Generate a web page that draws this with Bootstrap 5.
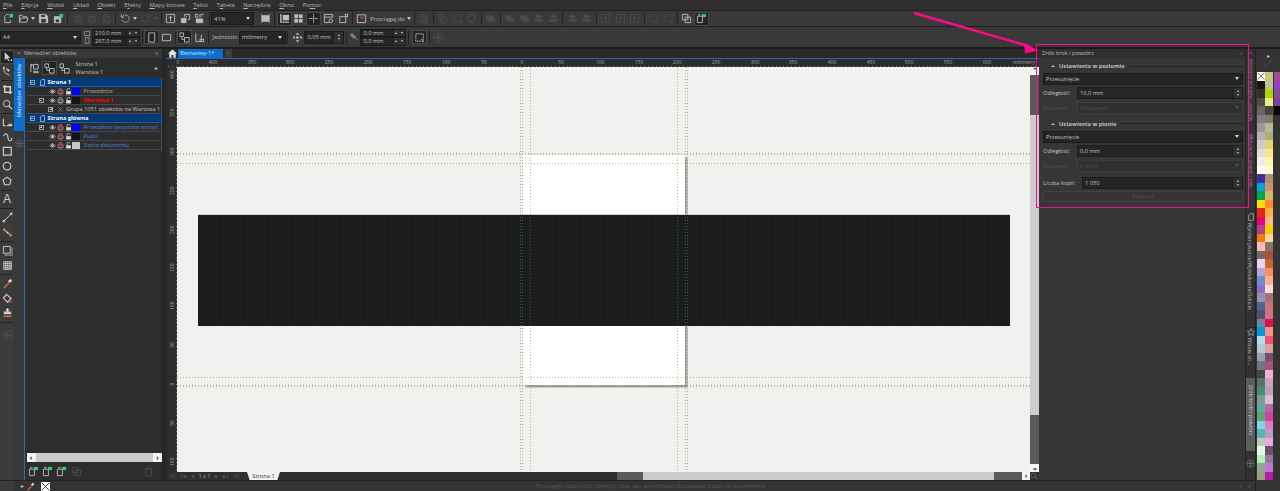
<!DOCTYPE html>
<html lang="pl">
<head>
<meta charset="utf-8">
<title>Zrób krok i powtórz</title>
<link href="https://cdn.jsdelivr.net/npm/bootstrap@5.3.0/dist/css/bootstrap.min.css" rel="stylesheet">
<style>
html,body{margin:0;height:491px;overflow:hidden}
body{width:1280px;background:#333;font-family:"Open Sans","Liberation Sans",sans-serif;font-size:5.7px;line-height:8px;color:#c4c4c4;position:relative}
.ic{width:11px;height:11px;fill:none;stroke:currentColor;stroke-width:1;display:block;flex:none}
.menu-strip{height:11px;background:#2f2f2f;border-bottom:1px solid #1f1f1f;padding-left:3px;gap:8.6px;font-size:5.9px;line-height:10px;color:#b8b8b8}
.tool-strip{background:#393939;border-bottom:1px solid #1f1f1f;padding-left:1px;color:#bdbdbd}
.ts-a{height:16px}
.ts-b{height:22px;padding-left:0;border-bottom:2px solid #1c1c1c}
.tbtn{width:14.7px;height:14px;flex:none;display:flex;align-items:center;justify-content:center}
.tbtn.on{background:#232323;box-shadow:inset 0 0 0 1px #4a4a4a}
.tbtn.off{color:#4d4d4d}
.vsep{width:1px;height:13px;background:#222;margin:0 1.5px;flex:none}
.drop-c{width:0;height:0;border:2px solid transparent;border-top:3px solid #c4c4c4;border-bottom:0;margin:0 1.5px 0 .5px;flex:none}
.drop-c.off{border-top-color:#4d4d4d}
.dk-field{background:#252525;border:1px solid #1b1b1b;color:#c4c4c4;display:flex;align-items:center;padding:0 2px;font-size:5.7px;line-height:8px;position:relative;flex:none;white-space:nowrap}
.fld-spin{margin-left:auto;width:10px;align-self:stretch;background:#303030;border-left:1px solid #1b1b1b;display:flex;flex-direction:column;align-items:center;justify-content:space-around;margin-right:-2px;padding:1px 0}
.fld-spin i{display:block;width:0;height:0;border:1.5px solid transparent}
.fld-spin i:first-child{border-bottom:2px solid #d0d0d0;border-top:0}
.fld-spin i:last-child{border-top:2px solid #d0d0d0;border-bottom:0}
.fld-spin.wide{flex-direction:row;width:13px;justify-content:space-around;padding:0;align-items:center}
.fld-arrow{margin-left:auto;width:0;height:0;border:2px solid transparent;border-top:3px solid #d5d5d5;border-bottom:0;margin-right:1px}
.cb-zoom{width:43px;height:13px}
.cb-page{width:81px;height:13px}
.cb-unit{width:47px;height:13px}
.fd-nudge{width:40px;height:13px}
.st2{display:flex;flex-direction:column;flex:none}
.st-ic{width:9px;margin-left:2px}
.st-sz{width:48px}
.st-off{width:46px;margin-left:2px}
.st-ic .ic{width:8px;height:7px}
.st2 .dk-field{height:8.5px}
.snap-lbl{width:33px;margin-left:1px;white-space:nowrap}
.unit-lbl{width:26px;margin-left:2px;white-space:nowrap}
.trf-ic{width:8px;height:16px;margin-left:2px}
.nudge-sel{margin-left:2px}
.below{height:442px}
.left-area{width:1255px;flex:none}
.main-area{height:431px}
.tools{width:14px;background:#3b3b3b;padding-top:.5px;flex:none;color:#d0d0d0}
.tools .tbtn{width:14px;height:14.6px}
.tool-a{font-size:12px;font-family:"Liberation Sans",sans-serif;line-height:12px}
.hsep{height:1px;background:#222;margin:1.4px 1px;flex:none}
.rail-l{width:10px;background:#383838;flex:none}
.rail-x{height:9px;line-height:9px;text-align:center;color:#aaa;flex:none}
.tab-v{writing-mode:vertical-rl;transform:rotate(180deg);background:#0b6ed0;color:#e8f1fb;height:73px;width:10px;font-size:5.8px;line-height:10px;text-align:right;padding-bottom:5px;white-space:nowrap}
.add-cir{width:9px;height:9px;color:#5c5c5c;margin:0 auto}
.dock-l{width:138px;background:#2d2d2d;flex:none;display:flex;flex-direction:column}
.dock-head{height:9px;background:#383838;line-height:9px;color:#b7b7b7;flex:none}
.dock-inner{flex:1;border-left:1.5px solid #2a6cb5;padding-left:1.5px;display:flex;flex-direction:column;min-height:0}
.obj-top{height:20px;flex:none;padding-left:1px;gap:0}
.obj-row{height:9px;line-height:8px;border-bottom:1px solid #484848;border-right:1px solid #484848;display:flex;align-items:center;white-space:nowrap;flex:none;overflow:hidden}
.obj-row.pg{background:#003a78;color:#fff;font-weight:700;border-color:#1d5a9c;padding-left:3px}
.exp{width:5px;height:5px;border:.7px solid #9a9a9a;position:relative;flex:none;display:block}
.exp::after{content:"";position:absolute;left:.5px;right:.5px;top:1.5px;height:.8px;background:#bbb}
.exp.plus::before{content:"";position:absolute;top:.5px;bottom:.5px;left:1.5px;width:.8px;background:#bbb}
.cols{display:grid;grid-template-columns:22px 8px 8px 7px 8px auto;align-items:center}
.cols .exp{margin-left:12px}
.mini{width:7px;height:7px}
.pg-ic{margin-left:4px;margin-right:2px;color:#cfe0f4}
.eye{color:#d4d4d4}.prn{color:#d77}.lck{color:#ddd}.prn-n{color:#bbb}
.swz{width:8px;height:7px;display:block}
.sw-blue{background:#0000ff}.sw-blk{background:#141414}.sw-gry{background:#c6c6c6}
.lbl{margin-left:4px}
.gd{color:#3d86d8;font-style:italic}
.pv{color:#a9a9a9;font-style:italic}
.red{color:#f00;font-weight:700}
.grp-row{padding-left:21.5px}
.grp-ic{width:5px;height:5px;margin:0 3px 0 5px;color:#aaa}
.obj-spacer{flex:1}
.lst-scroll{height:9px;background:#cbcbcb;display:flex;justify-content:space-between;flex:none}
.lst-scroll span,.sb-btn{background:#f4f4f4;color:#222;width:9px;display:flex;align-items:center;justify-content:center;font-weight:700;font-size:7px;line-height:8px;flex:none}
.obj-foot{height:18px;color:#bbb;flex:none;padding-left:1px;gap:3px}
.obj-foot .tbtn{width:11.4px}
.gut{width:4px;background:#262626;flex:none}
.work{width:873px;flex:none;display:flex;flex-direction:column;background:#2b2b2b}
.tabs-row{height:10px;background:#2a2a2a;border-bottom:1.5px solid #2a66ad;flex:none;align-items:stretch}
.home{width:12px;color:#e4e4e4;display:flex;align-items:center;justify-content:center;flex:none}
.doc-tab{width:45px;background:#0b6ed0;color:#cfe4f8;padding-left:2px;line-height:8px;flex:none}
.add-tab{width:7px;margin-left:2px;background:#3c3c3c;color:#666;text-align:center;line-height:8px;font-weight:700;flex:none}
.hr-ruler{height:8px;margin-left:2px;background-color:#2d2d2d;position:relative;overflow:hidden;flex:none;
 background-image:repeating-linear-gradient(90deg,#7a7a7a 0 1px,transparent 1px 3.87px);background-size:100% 1.5px;background-repeat:no-repeat;background-position:0 100%}
.rlab{position:absolute;top:0;font-size:5px;line-height:6px;color:#a0a0a0;transform:translateX(-50%);white-space:nowrap}
.work-mid{height:405px;flex:none;margin-left:2px}
.vr-ruler{width:9px;background-color:#2d2d2d;position:relative;flex:none;overflow:hidden;
 background-image:repeating-linear-gradient(180deg,#7a7a7a 0 1px,transparent 1px 3.87px);background-size:1.5px 100%;background-repeat:no-repeat;background-position:100% 0}
.vlab{position:absolute;left:0;font-size:5px;line-height:6px;color:#a0a0a0;transform:translateY(-50%) rotate(-90deg);width:8px;text-align:center}
.paper{width:853px;background:#f1f1ef;position:relative;overflow:hidden;flex:none}
.pg-white{position:absolute;left:346px;top:88px;width:162px;height:230px;background:#fff;box-shadow:2.5px 2.5px 0 #a4a4a4}
.pg-dark{position:absolute;left:21px;top:147px;width:812px;height:112px;background-color:#1b1c1c;border-top:1px solid #d4d4d4;
 background-image:repeating-linear-gradient(90deg,rgba(255,255,255,.014) 0 1px,transparent 1px 6px)}
.gl-h,.gl-v{position:absolute}
.gl-h{left:0;right:0;height:1px;background:repeating-linear-gradient(90deg,rgba(105,145,70,.55) 0 1px,transparent 1px 3px)}
.gl-v{top:0;bottom:0;width:1px;background:repeating-linear-gradient(180deg,rgba(105,145,70,.55) 0 1px,transparent 1px 3px)}
.v-scroll{width:9px;background:#5a5a5a;display:flex;flex-direction:column;flex:none}
.sb-btn{height:8px;width:100%}
.v-thumb{height:300px;background:#cdcdcd;margin-top:40px;flex:none}
.work-bot{height:8px;flex:none;margin-left:2px;background:#2f2f2f;color:#5f5f5f;font-size:5.5px;line-height:8px}
.pg-nav{width:79px;flex:none;padding:0 8px 0 2px;background:#2f2f2f;justify-content:space-between}
.pg-nav b{color:#b6b6b6;font-weight:400}
.pg-tab{width:33px;background:#f2f2f2;color:#333;text-align:center;flex:none;clip-path:polygon(0 0,100% 0,92% 100%,8% 100%);font-size:5.7px}
.hs-a{width:337px;flex:none;background:#2f2f2f}
.hs-b{width:26px;flex:none;background:#5a5a5a}
.hs-c{width:351px;flex:none;background:#cbcbcb}
.hs-d{width:28px;flex:none;background:#5a5a5a}
.hs-btn{width:8px;flex:none;background:#f4f4f4;color:#222;text-align:center;font-weight:700;line-height:8px;font-size:7px}
.hs-z{width:9px;flex:none;color:#6c6c6c}
.hs-z .ic{width:8px;height:8px}
.dock-r{width:206px;flex:none;background:#363636;display:flex;flex-direction:column}
.head-r{height:9px;background:#2f2f2f;line-height:9px;padding:0 3px;color:#bdbdbd;flex:none}
.head-r .dbl-ch{color:#777}
.panel-r{padding:4px 2px 0 4px;display:flex;flex-direction:column;gap:2.3px}
.grp{height:8px;font-weight:700;color:#bdbdbd;display:flex;align-items:center;gap:4px;padding-left:8px;margin-bottom:.7px}
.grp::before{content:"";width:0;height:0;border:2px solid transparent;border-bottom:2.5px solid #bdbdbd;border-top:0;flex:none}
.grp::after{content:"";flex:1;height:1px;background:#222}
.grp-next{margin-top:4.1px}
.fw{height:12px;width:100%}
.form-lbl{width:34px;flex:none;color:#c4c4c4;white-space:nowrap}
.form-lbl.dim{color:#505050}
.form-lbl.lng{width:39px}
.fld-off{background:#303030;border-color:#3d3d3d;color:#4f4f4f}
.fld-off .fld-arrow{border-top-color:#505050}
.frow{height:12px;display:flex;align-items:center}
.frow-copies{margin-top:3px}
.btn.apply,.btn.apply:disabled{height:11px;padding:0;background:#343434;border:1px solid #424242;color:#525252;font-size:5.7px;line-height:9px;border-radius:0;width:100%;opacity:1}
.rail-r{width:10px;background:#323232;border-left:1px solid #222;flex:none;position:relative;display:flex;flex-direction:column}
.rail-rx{height:10px;line-height:9px;text-align:center;color:#777;flex:none}
.vt{writing-mode:vertical-rl;font-size:5.4px;line-height:9px;color:#b4b4b4;white-space:nowrap;overflow:hidden;width:9px;flex:none}
.vt .ic{width:8px;height:8px;display:inline-block}
.vt.dim{color:#8c8c8c}
.vt.act{background:#5c5c5c;color:#d0d0d0}
.rt1{height:75px;font-size:4.4px}
.rt2{height:72px;font-size:4.4px}
.rt3{height:113px;margin-top:7px}
.rt4{height:43px;margin-top:1px;border-top:1px solid #222}
.rt5{height:73px;margin-top:8px;padding-top:7px}
.rail-add{width:9px;height:9px;color:#6a6a6a}
.status{height:11px;background:#333;border-top:1px solid #222;color:#5a5a5a;position:relative;flex:none}
.st-edge{width:14px;align-self:stretch;background:#3b3b3b;flex:none}
.st-l{padding-left:7px;gap:2px;color:#c4c4c4;width:436px;flex:none}
.st-l .ic{width:9px;height:9px}
.st-ch{color:#555}
.st-t{width:302px;text-align:center;flex:none;margin-left:49px}
.st-r{margin-left:auto;padding-right:4px;gap:5px;color:#5a5a5a;font-size:8px}
.x-sw{width:9px;height:9px;background:#fff;color:#333;flex:none;display:block}
.palette{width:25px;background:#333;border-left:1px solid #222;flex:none;display:flex;flex-direction:column}
.pal-top{height:23px;color:#c4c4c4;flex:none;padding-top:3px}
.pal-drop{width:8px;height:8px;color:#4b4b4b;margin:0 auto}
.pal-cols{gap:.5px;padding-left:.5px}
.pal-col{width:8px;display:flex;flex-direction:column;flex:none}
.pal-col i{display:block;height:8.5px;flex:none;color:#333}
.pal-col .ic{width:8px;height:8.5px}
.overlay{position:absolute;left:0;top:0;width:1280px;height:491px;pointer-events:none}
.pink-box{position:absolute;left:1036px;top:44px;width:213px;height:164px;border:1.5px solid #fb0a8c;pointer-events:none}
</style>
</head>
<body>
<svg width="0" height="0" class="position-absolute">
<defs>
<symbol id="new" viewBox="0 0 12 12"><path d="M2 3.500v7h6v-3" /><path d="M2 3.500 4 1.500h2"/><rect x="7" y="1" width="4" height="4" fill="#2fd06a" stroke="none"/></symbol>
<symbol id="open" viewBox="0 0 12 12"><path d="M1.500 10V2.500h3l1 1.500h4v1.500M1.500 10l1.500-4.500h8L9.500 10z"/></symbol>
<symbol id="save" viewBox="0 0 12 12"><path d="M1.500 1.500h7l2 2v7h-9z" fill="currentColor"/><rect x="3.500" y="2" width="4" height="2.500" fill="#393939" stroke="none"/><rect x="3.500" y="6.500" width="5" height="4" fill="#393939" stroke="none"/></symbol>
<symbol id="savep" viewBox="0 0 12 12"><path d="M1.500 4h6l1 1v5.500h-7z" fill="currentColor"/><rect x="3" y="7" width="3.500" height="3" fill="#393939" stroke="none"/><rect x="7" y="1" width="4" height="4" fill="#2fd06a" stroke="none"/></symbol>
<symbol id="clip" viewBox="0 0 12 12"><path d="M3 2h5v7H3zM5 4h5v6.500H5z"/></symbol>
<symbol id="undo" viewBox="0 0 12 12"><path d="M3 3.500a4 4 0 1 1-1 3" stroke-dasharray="2 .6"/><path d="M1.500 1.500v3h3"/></symbol>
<symbol id="redo" viewBox="0 0 12 12"><path d="M9 3.500a4 4 0 1 0 1 3"/><path d="M10.500 1.500v3h-3"/></symbol>
<symbol id="imp" viewBox="0 0 12 12"><path d="M1.500 1.500h9v9h-9zM6 9V4M4 5.500 6 3.500l2 2"/></symbol>
<symbol id="exp" viewBox="0 0 12 12"><path d="M1.500 6h5v4.500h-5z" fill="currentColor"/><path d="M5 4V1.500h5.500V7H8.500" /><path d="M6 5l2-2"/></symbol>
<symbol id="pdf" viewBox="0 0 12 12"><path d="M2.500 6.500h7v4h-7z" fill="currentColor"/><path d="M1.500 1.500h3M5.500 1.500v3M7.500 1.500h3M7.500 1.500v3M1.500 1.500v3h3"/></symbol>
<symbol id="full" viewBox="0 0 12 12"><path d="M2 3h8v6H2z" fill="currentColor"/><path d="M1 1.500 3 3M11 1.500 9 3M1 10.500 3 9M11 10.500 9 9"/></symbol>
<symbol id="rul" viewBox="0 0 12 12"><path d="M2 1v9h9" stroke-width="1.500"/><rect x="4" y="2" width="7" height="6" fill="currentColor" stroke="none"/></symbol>
<symbol id="grd" viewBox="0 0 12 12"><rect x="1.500" y="1.500" width="9" height="9" fill="currentColor" stroke="none"/><path d="M1.500 6h9M6 1.500v9" stroke="#393939"/></symbol>
<symbol id="gui" viewBox="0 0 12 12"><path d="M6 1v10M1 6h10" stroke-dasharray="1.500 .5" /></symbol>
<symbol id="pgv" viewBox="0 0 12 12"><path d="M1.500 1.500h9v3h-9zM1.500 4.500v6h5"/><circle cx="8.500" cy="8.500" r="2"/></symbol>
<symbol id="snp" viewBox="0 0 12 12"><rect x="2" y="4" width="6.500" height="6.500"/><rect x="8" y="1.500" width="2.500" height="2.500"/></symbol>
<symbol id="mag" viewBox="0 0 12 12"><path d="M1.500 2h9v8.500h-9z"/><path d="M5 3.500l3 3M8 3.500l-3 3" stroke="#e05050"/></symbol>
<symbol id="al1" viewBox="0 0 12 12"><path d="M1.500 3h7v3h-7zM3.500 6h7v3h-7z" fill="currentColor"/></symbol>
<symbol id="al2" viewBox="0 0 12 12"><path d="M6 1v10M3 3h6v2H3zM2 7h8v2H2z" fill="currentColor"/></symbol>
<symbol id="hm" viewBox="0 0 12 12"><path d="M6 1.500 1 6h1.500v4.500h2.500V7.500h2v3h2.500V6H11z" fill="currentColor" stroke="none"/></symbol>
<symbol id="dbl" viewBox="0 0 12 12"><path d="M1.500 1.500h6v6h-6zM4.500 4.500h6v6h-6z"/></symbol>
<symbol id="dblg" viewBox="0 0 12 12"><path d="M1.500 3.500h5.500v7h-5.500z"/><path d="M3 3V1.500h2"/><rect x="6.500" y="1" width="4.500" height="3.500" fill="#2fd06a" stroke="none"/></symbol>
<symbol id="wd" viewBox="0 0 12 12"><path d="M2 1.500h1.500v1.500H2zM2 3v7M5 1.500h5v5H5zM5 9h5v1.500H5z"/></symbol>
<symbol id="hw" viewBox="0 0 12 12"><path d="M1.500 2.500h9v7h-9z"/></symbol>
<symbol id="vw" viewBox="0 0 12 12"><path d="M3 1h6.500v10H3z"/></symbol>
<symbol id="ob1" viewBox="0 0 12 12"><path d="M1 1h4v4H1zM6 6h5v5H6zM3 5v3h3"/></symbol>
<symbol id="ob2" viewBox="0 0 12 12"><path d="M2 1.500v9h4M8 3v7.500"/><rect x="6.500" y="8" width="4" height="2.500"/></symbol>
<symbol id="nudge" viewBox="0 0 12 12"><path d="M6 .5 8 3H4zM6 11.500 4 9h4zM.5 6 3 4v4zM11.500 6 9 8V4z" fill="currentColor" stroke="none"/><circle cx="6" cy="6" r="1.500" fill="currentColor" stroke="none"/></symbol>
<symbol id="trf" viewBox="0 0 12 12"><path d="M1.500 1.500h3v3h-3zM4.500 4.500H8v3H4.500zM9 8.500l2 2"/></symbol>
<symbol id="sel" viewBox="0 0 12 12"><path d="M2 2h8v8H2z" stroke-dasharray="2 .6"/><path d="M7.500 7.500 11 11" /></symbol>
<symbol id="plusc" viewBox="0 0 12 12"><circle cx="6" cy="6" r="5"/><path d="M6 1.500v9M1.500 6h9" stroke-width="1.500"/></symbol>
<symbol id="pick" viewBox="0 0 12 12"><path d="M3 1v9l2.200-2 1.600 3.200 1.300-.7-1.600-3H9z" fill="currentColor" stroke="none"/><rect x="9.500" y="9.500" width="1.500" height="1.500" fill="#fff" stroke="none"/></symbol>
<symbol id="shp" viewBox="0 0 12 12"><path d="M2 2.500 2.500 6 4 8l4 2"/><rect x="1" y="1" width="2" height="2" fill="currentColor" stroke="none"/><path d="M5 3l2 3 1-1.500z" fill="currentColor"/></symbol>
<symbol id="crp" viewBox="0 0 12 12"><path d="M3 1v8h8M1 3h8v8" stroke-width="1.600"/></symbol>
<symbol id="zm" viewBox="0 0 12 12"><circle cx="5" cy="5" r="3.500"/><path d="M7.500 7.500 11 11" stroke-width="1.500"/></symbol>
<symbol id="fh" viewBox="0 0 12 12"><path d="M1.500 2v7.500H4M5 9.500h2.500" stroke-width="1.200"/><path d="M7 7.500h4v2.500H7z" fill="currentColor" stroke="none"/></symbol>
<symbol id="art" viewBox="0 0 12 12"><path d="M2 4.500C2 2 5 1 6 3.500S6 9 8 9.500s3-1 2.500-3" stroke-width="1.200"/></symbol>
<symbol id="rct" viewBox="0 0 12 12"><path d="M1.500 1.500h8.500v8.500H1.500z" stroke-width="1.300"/></symbol>
<symbol id="ell" viewBox="0 0 12 12"><circle cx="5.500" cy="5.500" r="4.200" stroke-width="1.200"/></symbol>
<symbol id="pol" viewBox="0 0 12 12"><path d="M5.500 1.200 9.800 4.300 8.200 9.500H2.800L1.200 4.300z" stroke-width="1.200"/></symbol>
<symbol id="ln" viewBox="0 0 12 12"><path d="M2 10 10 2"/><circle cx="2" cy="10" r="1" fill="currentColor"/><circle cx="10" cy="2" r="1" fill="currentColor"/></symbol>
<symbol id="con" viewBox="0 0 12 12"><path d="M2 3 10 9" stroke="#ddd" /><circle cx="2.500" cy="3" r="1.500" fill="#e0733a" stroke="none"/><circle cx="9.500" cy="9" r="1.500" fill="#e0733a" stroke="none"/><circle cx="6" cy="6" r="1" fill="#ddd" stroke="none"/></symbol>
<symbol id="shd" viewBox="0 0 12 12"><path d="M1.500 1.500h7.500v7.500H1.500z"/><path d="M9.500 3.500h1.500v7.500H3.500V9.500" stroke-width="1.300" stroke="#8a8a8a"/></symbol>
<symbol id="chk" viewBox="0 0 12 12"><rect x="1.500" y="1.500" width="9" height="9" fill="#eee" stroke="none"/><path d="M2 3h8M2 5h8M2 7h8M2 9h8" stroke="#333" stroke-dasharray="1 1"/><path d="M3 2v8M5 2v8M7 2v8M9 2v8" stroke="#333" stroke-dasharray="1 1"/></symbol>
<symbol id="eyd" viewBox="0 0 12 12"><path d="M1.500 10.500 7 5l1 1-5.500 5.500z" fill="#e0733a" stroke="none"/><path d="M7 3.500 8.500 2a1 1 0 0 1 1.500 1.500L8.500 5z" fill="#ddd" stroke="#ddd"/></symbol>
<symbol id="bkt" viewBox="0 0 12 12"><path d="M5 1.500 10 6 6 10 1.500 5.500z" stroke-width="1.200" /><path d="M7 8l3 1v1.500H8z" fill="#e05050" stroke="none"/></symbol>
<symbol id="sfl" viewBox="0 0 12 12"><path d="M4 3 6 1l2 2-1 1v1h3v3H2V5h3V4z" fill="currentColor" stroke="none"/><path d="M1.500 9.500h9v1.500h-9z" fill="#e0733a" stroke="none"/></symbol>
<symbol id="eye" viewBox="0 0 12 12"><path d="M1 6c2.500-4 7.500-4 10 0-2.500 4-7.500 4-10 0z"/><circle cx="6" cy="6" r="1.800" fill="currentColor"/></symbol>
<symbol id="prt" viewBox="0 0 12 12"><path d="M3.500 5V1.500h5V5M1.500 5h9v4h-9zM3.500 8v2.500h5V8" stroke-width="1.200"/></symbol>
<symbol id="lk" viewBox="0 0 12 12"><rect x="2" y="5.500" width="8" height="5.500" fill="currentColor" stroke="none"/><path d="M3.500 5.500V3A2.500 2.500 0 0 1 8.500 3" stroke-width="1.200"/></symbol>
<symbol id="pg" viewBox="0 0 12 12"><path d="M2.500 3.500 5 1h4.500v10h-7z" stroke-width="1.200"/></symbol>
<symbol id="tr" viewBox="0 0 12 12"><path d="M3 3.500h6V11H3zM2 2.500h8M5 1h2" /></symbol>
<symbol id="star" viewBox="0 0 12 12"><path d="M6 1 7.500 4.600l3.800.3-2.900 2.500.9 3.700L6 9.200 2.700 11.100l.9-3.700L.7 4.900l3.800-.3z"/></symbol>
<symbol id="xx" viewBox="0 0 12 12"><path d="M1 1 11 11M11 1 1 11" stroke-width="1.200"/></symbol>
</defs>
</svg>

<nav class="menu-strip d-flex align-items-center">
<span><u>P</u>lik</span><span><u>E</u>dycja</span><span><u>W</u>idok</span><span><u>U</u>kład</span><span><u>O</u>biekt</span><span>E<u>f</u>ekty</span><span><u>M</u>apy bitowe</span><span><u>T</u>ekst</span><span>T<u>a</u>bela</span><span><u>N</u>arzędzia</span><span><u>O</u>kno</span><span>Po<u>m</u>oc</span>
</nav>

<div class="tool-strip ts-a d-flex align-items-center">
<span class="tbtn"><svg class="ic"><use href="#new"/></svg></span><span class="tbtn"><svg class="ic"><use href="#open"/></svg></span><i class="drop-c"></i><span class="tbtn"><svg class="ic"><use href="#save"/></svg></span><span class="tbtn"><svg class="ic"><use href="#savep"/></svg></span><i class="vsep"></i>
<span class="tbtn off"><svg class="ic"><use href="#clip"/></svg></span><span class="tbtn off"><svg class="ic"><use href="#clip"/></svg></span><span class="tbtn off"><svg class="ic"><use href="#clip"/></svg></span><i class="vsep"></i>
<span class="tbtn"><svg class="ic"><use href="#undo"/></svg></span><i class="drop-c"></i><span class="tbtn off"><svg class="ic"><use href="#redo"/></svg></span><i class="drop-c off"></i><i class="vsep"></i>
<span class="tbtn"><svg class="ic"><use href="#imp"/></svg></span><span class="tbtn"><svg class="ic"><use href="#exp"/></svg></span><span class="tbtn"><svg class="ic"><use href="#pdf"/></svg></span><i class="vsep"></i>
<div class="dk-field cb-zoom">41%<span class="fld-arrow"></span></div>
<span class="tbtn ms-1"><svg class="ic"><use href="#full"/></svg></span><i class="vsep"></i>
<span class="tbtn on"><svg class="ic"><use href="#rul"/></svg></span><span class="tbtn"><svg class="ic"><use href="#grd"/></svg></span><span class="tbtn on"><svg class="ic"><use href="#gui"/></svg></span><span class="tbtn"><svg class="ic"><use href="#pgv"/></svg></span><span class="tbtn"><svg class="ic"><use href="#snp"/></svg></span><i class="vsep"></i>
<span class="tbtn"><svg class="ic"><use href="#mag"/></svg></span>
<span class="snap-lbl">Przyciągaj do</span><i class="drop-c ms-1"></i><i class="vsep"></i>
<span class="tbtn off"><svg class="ic"><use href="#clip"/></svg></span><i class="vsep"></i>
<span class="tbtn off"><svg class="ic"><use href="#dbl"/></svg></span><span class="tbtn off"><svg class="ic"><use href="#sel"/></svg></span><span class="tbtn off"><svg class="ic"><use href="#ell"/></svg></span><i class="vsep"></i>
<span class="tbtn off"><svg class="ic"><use href="#al1"/></svg></span><i class="vsep"></i>
<span class="tbtn off"><svg class="ic"><use href="#al1"/></svg></span><span class="tbtn off"><svg class="ic"><use href="#al1"/></svg></span><span class="tbtn off"><svg class="ic"><use href="#al2"/></svg></span><span class="tbtn off"><svg class="ic"><use href="#al2"/></svg></span><i class="vsep"></i>
<span class="tbtn off"><svg class="ic"><use href="#al2"/></svg></span><span class="tbtn off"><svg class="ic"><use href="#al2"/></svg></span><i class="vsep"></i>
<span class="tbtn off"><svg class="ic"><use href="#imp"/></svg></span><span class="tbtn off"><svg class="ic"><use href="#imp"/></svg></span><span class="tbtn off"><svg class="ic"><use href="#imp"/></svg></span><i class="vsep"></i>
<span class="tbtn off"><svg class="ic"><use href="#sel"/></svg></span><span class="tbtn off"><svg class="ic"><use href="#sel"/></svg></span><i class="vsep"></i>
<span class="tbtn"><svg class="ic"><use href="#dbl"/></svg></span><span class="tbtn on"><svg class="ic"><use href="#dblg"/></svg></span>
</div>

<div class="tool-strip ts-b d-flex align-items-center">
<div class="dk-field cb-page">A4<span class="fld-arrow"></span></div>
<div class="st2 st-ic"><svg class="ic"><use href="#hw"/></svg><svg class="ic"><use href="#vw"/></svg></div>
<div class="st2 st-sz"><div class="dk-field">210,0 mm<span class="fld-spin wide"><i></i><i></i></span></div><div class="dk-field">297,0 mm<span class="fld-spin wide"><i></i><i></i></span></div></div>
<i class="vsep"></i>
<span class="tbtn on"><svg class="ic"><use href="#vw"/></svg></span><span class="tbtn"><svg class="ic"><use href="#hw"/></svg></span><i class="vsep"></i>
<span class="tbtn on"><svg class="ic"><use href="#ob1"/></svg></span><span class="tbtn"><svg class="ic"><use href="#ob2"/></svg></span><i class="vsep"></i>
<span class="unit-lbl">Jednostki:</span>
<div class="dk-field cb-unit">milimetry<span class="fld-arrow"></span></div><i class="vsep"></i>
<span class="tbtn"><svg class="ic"><use href="#nudge"/></svg></span>
<div class="dk-field fd-nudge">0,05 mm<span class="fld-spin"><i></i><i></i></span></div><i class="vsep"></i>
<svg class="ic trf-ic"><use href="#trf"/></svg>
<div class="st2 st-off"><div class="dk-field">0,0 mm<span class="fld-spin wide"><i></i><i></i></span></div><div class="dk-field">0,0 mm<span class="fld-spin wide"><i></i><i></i></span></div></div>
<i class="vsep"></i>
<span class="tbtn on nudge-sel"><svg class="ic"><use href="#sel"/></svg></span><i class="vsep"></i>
<span class="tbtn off"><svg class="ic"><use href="#plusc"/></svg></span>
</div>

<div class="below d-flex">
<div class="left-area d-flex flex-column">
<div class="main-area d-flex">

<aside class="tools d-flex flex-column">
<span class="tbtn on"><svg class="ic"><use href="#pick"/></svg></span><span class="tbtn"><svg class="ic"><use href="#shp"/></svg></span><i class="hsep"></i>
<span class="tbtn"><svg class="ic"><use href="#crp"/></svg></span><span class="tbtn"><svg class="ic"><use href="#zm"/></svg></span><i class="hsep"></i>
<span class="tbtn"><svg class="ic"><use href="#fh"/></svg></span><span class="tbtn"><svg class="ic"><use href="#art"/></svg></span><span class="tbtn"><svg class="ic"><use href="#rct"/></svg></span><span class="tbtn"><svg class="ic"><use href="#ell"/></svg></span><span class="tbtn"><svg class="ic"><use href="#pol"/></svg></span><i class="hsep"></i>
<span class="tbtn tool-a">A</span><i class="hsep"></i>
<span class="tbtn"><svg class="ic"><use href="#ln"/></svg></span><span class="tbtn"><svg class="ic"><use href="#con"/></svg></span><i class="hsep"></i>
<span class="tbtn"><svg class="ic"><use href="#shd"/></svg></span><span class="tbtn"><svg class="ic"><use href="#chk"/></svg></span><i class="hsep"></i>
<span class="tbtn"><svg class="ic"><use href="#eyd"/></svg></span><span class="tbtn"><svg class="ic"><use href="#bkt"/></svg></span><span class="tbtn"><svg class="ic"><use href="#sfl"/></svg></span><i class="hsep"></i>
<span class="tbtn off mt-1"><svg class="ic"><use href="#plusc"/></svg></span>
</aside>

<div class="rail-l d-flex flex-column">
<div class="rail-x">×</div>
<div class="tab-v">Menedżer obiektów</div>
<svg class="ic add-cir mt-2"><use href="#plusc"/></svg>
</div>

<section class="dock-l">
<div class="dock-head d-flex"><span class="text-nowrap">Menedżer obiektów</span><span class="ms-auto me-1">«</span></div>
<div class="dock-inner">
<div class="obj-top d-flex align-items-center">
<span class="tbtn"><svg class="ic"><use href="#wd"/></svg></span><span class="tbtn on"><svg class="ic"><use href="#ob1"/></svg></span><span class="tbtn"><svg class="ic"><use href="#ob1"/></svg></span>
<div class="ms-1"><div>Strona 1</div><div>Warstwa 1</div></div>
<span class="ms-auto me-1">▸</span>
</div>
<div class="obj-row pg"><i class="exp"></i><svg class="ic mini pg-ic"><use href="#pg"/></svg><span>Strona 1</span></div>
<div class="obj-row cols"><span></span><svg class="ic mini eye"><use href="#eye"/></svg><svg class="ic mini prn"><use href="#prt"/></svg><svg class="ic mini lck"><use href="#lk"/></svg><i class="swz sw-blue"></i><span class="lbl pv">Prowadnice</span></div>
<div class="obj-row cols"><span><i class="exp"></i></span><svg class="ic mini eye"><use href="#eye"/></svg><svg class="ic mini prn-n"><use href="#prt"/></svg><svg class="ic mini lck"><use href="#lk"/></svg><i class="swz sw-blk"></i><span class="lbl red">Warstwa 1</span></div>
<div class="obj-row grp-row"><i class="exp plus"></i><svg class="ic grp-ic"><use href="#xx"/></svg><span>Grupa 1051 obiektów na Warstwa 1</span></div>
<div class="obj-row pg"><i class="exp"></i><svg class="ic mini pg-ic"><use href="#pg"/></svg><span>Strona główna</span></div>
<div class="obj-row cols"><span><i class="exp plus"></i></span><svg class="ic mini eye"><use href="#eye"/></svg><svg class="ic mini prn"><use href="#prt"/></svg><svg class="ic mini lck"><use href="#lk"/></svg><i class="swz sw-blue"></i><span class="lbl gd">Prowadnice (wszystkie strony)</span></div>
<div class="obj-row cols"><span></span><svg class="ic mini eye"><use href="#eye"/></svg><svg class="ic mini prn"><use href="#prt"/></svg><svg class="ic mini lck"><use href="#lk"/></svg><i class="swz sw-blk"></i><span class="lbl gd">Pulpit</span></div>
<div class="obj-row cols"><span></span><svg class="ic mini eye"><use href="#eye"/></svg><svg class="ic mini prn"><use href="#prt"/></svg><svg class="ic mini lck"><use href="#lk"/></svg><i class="swz sw-gry"></i><span class="lbl gd">Siatka dokumentu</span></div>
<div class="obj-spacer"></div>
<div class="lst-scroll"><span>‹</span><span>›</span></div>
<div class="obj-foot d-flex align-items-center">
<span class="tbtn"><svg class="ic"><use href="#dblg"/></svg></span><span class="tbtn"><svg class="ic"><use href="#dblg"/></svg></span><span class="tbtn"><svg class="ic"><use href="#dblg"/></svg></span><span class="tbtn off"><svg class="ic"><use href="#dbl"/></svg></span>
<span class="tbtn off ms-auto me-2"><svg class="ic"><use href="#tr"/></svg></span>
</div>
</div>
</section>

<div class="gut"></div>

<main class="work">
<div class="tabs-row d-flex">
<span class="home"><svg class="ic"><use href="#hm"/></svg></span>
<span class="doc-tab">Beznazwy-1*</span>
<span class="add-tab">+</span>
</div>
<div class="hr-ruler">
<span class="rlab" style="left:10px">0</span><span class="rlab" style="left:45px">400</span><span class="rlab" style="left:84px">350</span><span class="rlab" style="left:122px">300</span><span class="rlab" style="left:161px">250</span><span class="rlab" style="left:200px">200</span><span class="rlab" style="left:239px">150</span><span class="rlab" style="left:278px">100</span><span class="rlab" style="left:316px">50</span><span class="rlab" style="left:354px">0</span><span class="rlab" style="left:393px">50</span><span class="rlab" style="left:432px">100</span><span class="rlab" style="left:471px">150</span><span class="rlab" style="left:509px">200</span><span class="rlab" style="left:548px">250</span><span class="rlab" style="left:587px">300</span><span class="rlab" style="left:625px">350</span><span class="rlab" style="left:664px">400</span><span class="rlab" style="left:703px">450</span><span class="rlab" style="left:741px">500</span><span class="rlab" style="left:780px">550</span><span class="rlab" style="left:819px">600</span><span class="rlab" style="left:856px">milimetry</span>
</div>
<div class="work-mid d-flex">
<div class="vr-ruler">
<span class="vlab" style="top:8px">400</span><span class="vlab" style="top:46px">350</span><span class="vlab" style="top:85px">300</span><span class="vlab" style="top:124px">250</span><span class="vlab" style="top:163px">200</span><span class="vlab" style="top:201px">150</span><span class="vlab" style="top:239px">100</span><span class="vlab" style="top:278px">50</span><span class="vlab" style="top:317px">0</span><span class="vlab" style="top:356px">50</span><span class="vlab" style="top:395px">100</span>
</div>
<div class="paper">
<div class="pg-white"></div>
<div class="pg-dark"></div>
<i class="gl-h" style="top:87px"></i><i class="gl-h" style="top:86px"></i><i class="gl-h" style="top:96px"></i><i class="gl-h" style="top:310px"></i><i class="gl-h" style="top:318px"></i><i class="gl-h" style="top:319px"></i>
<i class="gl-v" style="left:343px"></i><i class="gl-v" style="left:345px"></i><i class="gl-v" style="left:353px"></i><i class="gl-v" style="left:500px"></i><i class="gl-v" style="left:508px"></i><i class="gl-v" style="left:510px"></i>
</div>
<div class="v-scroll"><span class="sb-btn">⌃</span><div class="v-thumb"></div><div class="flex-grow-1"></div><span class="sb-btn">⌄</span></div>
</div>
<div class="work-bot d-flex">
<div class="pg-nav d-flex"><span>⊡</span><span>|◂</span><span>◂</span><b>1 z 1</b><span>▸</span><span>▸|</span><span>⊡</span></div>
<div class="pg-tab">Strona 1</div>
<div class="hs-a"></div><div class="hs-b"></div><div class="hs-c"></div><div class="hs-d"></div>
<div class="hs-btn">›</div>
<div class="hs-z"><svg class="ic"><use href="#zm"/></svg></div>
</div>
</main>

<section class="dock-r">
<div class="head-r d-flex"><span>Zrób krok i powtórz</span><span class="ms-auto dbl-ch">»</span></div>
<div class="panel-r">
<div class="grp">Ustawienia w poziomie</div>
<div class="dk-field fw">Przesunięcie<span class="fld-arrow"></span></div>
<div class="frow"><span class="form-lbl">Odległość:</span><div class="dk-field flex-grow-1 h-100">10,0 mm<span class="fld-spin"><i></i><i></i></span></div></div>
<div class="frow"><span class="form-lbl dim">Kierunek:</span><div class="dk-field fld-off flex-grow-1 h-100">Do prawej<span class="fld-arrow"></span></div></div>
<div class="grp grp-next">Ustawienia w pionie</div>
<div class="dk-field fw">Przesunięcie<span class="fld-arrow"></span></div>
<div class="frow"><span class="form-lbl">Odległość:</span><div class="dk-field flex-grow-1 h-100">0,0 mm<span class="fld-spin"><i></i><i></i></span></div></div>
<div class="frow"><span class="form-lbl dim">Kierunek:</span><div class="dk-field fld-off flex-grow-1 h-100">U góry<span class="fld-arrow"></span></div></div>
<div class="frow frow-copies"><span class="form-lbl lng">Liczba kopii:</span><div class="dk-field flex-grow-1 h-100">1 050<span class="fld-spin"><i></i><i></i></span></div></div>
<button type="button" class="btn apply" disabled>Zastosuj</button>
</div>
</section>

<aside class="rail-r">
<div class="rail-rx">×</div>
<div class="vt dim rt1">Menedżer widoków i obiektów</div>
<div class="vt dim rt2">Właściwości obiektu i stylu</div>
<div class="vt rt3"><svg class="ic"><use href="#pg"/></svg> Wyrównywanie/Wyblakanie/Szkicie</div>
<div class="vt rt4"><svg class="ic"><use href="#star"/></svg> Wstaw zn...</div>
<div class="vt act rt5">Zrób kroki i powtórz</div>
<svg class="ic rail-add mx-auto mt-2"><use href="#plusc"/></svg>
</aside>
</div>

<footer class="status d-flex align-items-center">
<i class="st-edge"></i>
<div class="st-l d-flex align-items-center"><span>▸</span><svg class="ic"><use href="#eyd"/></svg><span class="st-ch">‹</span><span class="x-sw"><svg class="ic"><use href="#xx"/></svg></span></div>
<div class="st-t text-nowrap">Przeciągnij kolory (lub obiekty) tutaj, aby przechować/dopasować kolory w dokumencie</div>
<div class="st-r d-flex"><span>›</span><span>»</span></div>
</footer>
</div>

<aside class="palette">
<div class="pal-top text-center"><div>▸</div><svg class="ic pal-drop"><use href="#ln"/></svg></div>
<div class="pal-cols d-flex">
<div class="pal-col">
<i class="bg-white"><svg class="ic"><use href="#xx"/></svg></i>
<i style="background:#151515"></i><i style="background:#303030"></i><i style="background:#4d4d4d"></i><i style="background:#666"></i><i style="background:#808080"></i><i style="background:#999"></i><i style="background:#b3b3b3"></i><i style="background:#ccc"></i><i style="background:#ddd"></i><i style="background:#eee"></i><i style="background:#fff"></i><i style="background:#40309a"></i><i style="background:#00a3da"></i><i style="background:#00a651"></i><i style="background:#ffdd00"></i><i style="background:#e2261c"></i><i style="background:#e6007e"></i><i style="background:#b3408f"></i><i style="background:#f57c00"></i><i style="background:#ffb7bf"></i><i style="background:#7a6a60"></i><i style="background:#e0d8f5"></i><i style="background:#b3a6dc"></i><i style="background:#6c8fd0"></i><i style="background:#8a70c4"></i><i style="background:#9a8fb8"></i><i style="background:#506890"></i><i style="background:#55506e"></i><i style="background:#6f87a0"></i><i style="background:#0098d8"></i><i style="background:#b0dcf0"></i><i style="background:#b8c8d4"></i><i style="background:#93a4ac"></i><i style="background:#6c7880"></i><i style="background:#3e484a"></i><i style="background:#56736e"></i><i style="background:#4a8a78"></i><i style="background:#7a9c98"></i><i style="background:#5cae98"></i><i style="background:#5ea86e"></i><i style="background:#7cd8e4"></i><i style="background:#5cb0b8"></i><i style="background:#b8ccb8"></i><i style="background:#e0fce0"></i><i style="background:#b0f0b0"></i><i style="background:#90a498"></i><i style="background:#98a478"></i>
</div>
<div class="pal-col">
<i style="background:#c3c87a"></i><i style="background:#b9c59a"></i><i style="background:#b8d000"></i><i style="background:#e8ee88"></i><i style="background:#4a463c"></i><i style="background:#7d7a66"></i><i style="background:#b8b698"></i><i style="background:#b0ac78"></i><i style="background:#e0d470"></i><i style="background:#ffe884"></i><i style="background:#fff4ac"></i><i style="background:#fff8d8"></i><i style="background:#a89070"></i><i style="background:#d09460"></i><i style="background:#d8b468"></i><i style="background:#ff8a30"></i><i style="background:#ffb040"></i><i style="background:#ffc080"></i><i style="background:#ffcc00"></i><i style="background:#ffd8a0"></i><i style="background:#847860"></i><i style="background:#a85040"></i><i style="background:#c06a30"></i><i style="background:#ff8c60"></i><i style="background:#ffb090"></i><i style="background:#ffe0d0"></i><i style="background:#a87078"></i><i style="background:#d07078"></i><i style="background:#d07090"></i><i style="background:#e01048"></i><i style="background:#ff9090"></i><i style="background:#f85070"></i><i style="background:#d8a0a0"></i><i style="background:#784e68"></i><i style="background:#a85080"></i><i style="background:#f8b0d0"></i><i style="background:#d0a0c0"></i><i style="background:#b8a0b0"></i><i style="background:#d8c0d0"></i><i style="background:#b868a0"></i><i style="background:#d040a8"></i><i style="background:#e078c8"></i><i style="background:#c098c0"></i><i style="background:#e8a8e8"></i><i style="background:#685068"></i><i style="background:#987898"></i><i style="background:#c078d8"></i><i style="background:#b818a8"></i>
</div>
<div class="pal-col">
<i style="background:#a04a9c"></i><i style="background:#9b3dc0"></i><i style="background:#7d4f8e"></i><i style="background:#7b3f9e"></i><i style="background:#000"></i>
</div>
</div>
</aside>
</div>

<div class="pink-box"></div>
<svg class="overlay" viewBox="0 0 1280 491"><path d="M914 13 1030 46.500" stroke="#fb0a8c" stroke-width="2.500" fill="none"/><path d="M1038.500 50.500 1024 43 1025 53.500z" fill="#fb0a8c"/></svg>
</body>
</html>
